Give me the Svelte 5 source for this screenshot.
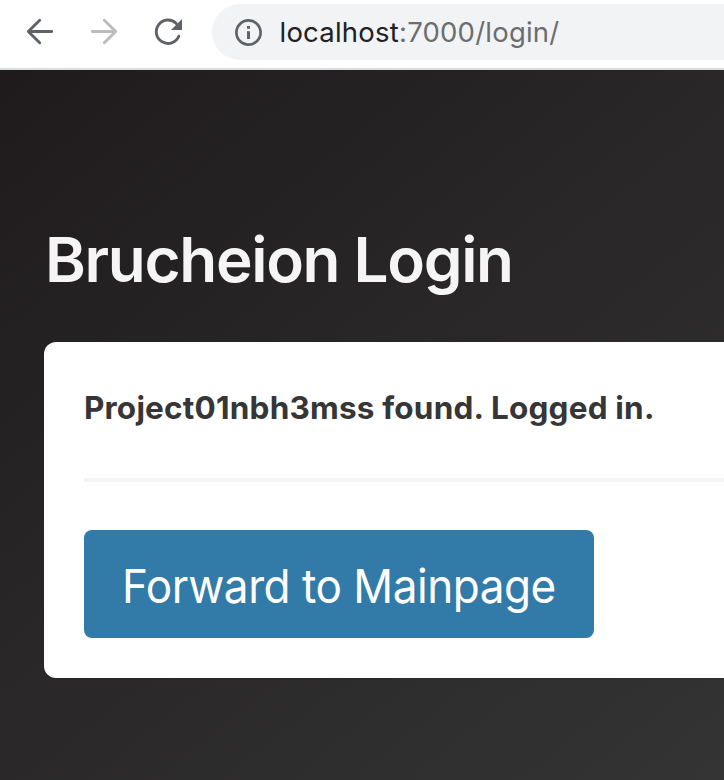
<script>
  const host = 'localhost';
  const path = ':7000/login/';
</script>

<div class="window">
  <header class="toolbar">
    <svg class="nav" width="212" height="64" viewBox="0 0 212 64" fill="none" stroke-linecap="round" stroke-linejoin="round">
      <path d="M51.7 31.5H28.5M39.7 20.2L28.3 31.5L39.7 42.7" stroke="#5f6368" stroke-width="2.9" />
      <path d="M92.3 31.5H115.5M104.3 20.2L115.7 31.5L104.3 42.7" stroke="#babcbe" stroke-width="2.9" />
      <path d="M178.8 36.2A11.7 11.7 0 1 1 176.3 23.5" stroke="#5f6368" stroke-width="2.9" />
      <path d="M182 19V30H171Z" fill="#5f6368" />
    </svg>
    <div class="address">
      <svg width="28" height="28" viewBox="0 0 28 28" fill="none">
        <circle cx="13.5" cy="14.5" r="12.1" stroke="#5f6368" stroke-width="2.7" />
        <path d="M13.5 8V10.8M13.5 13.3V21" stroke="#5f6368" stroke-width="3" />
      </svg>
      <span class="url"><span class="host">{host}</span>{path}</span>
    </div>
  </header>
  <main>
    <h1>Brucheion Login</h1>
    <section class="box">
      <p>Project01nbh3mss found. Logged in.</p>
      <hr />
      <button><span class="label">Forward to Mainpage</span></button>
    </section>
  </main>
</div>

<style>
  .window {
    width: 724px;
    height: 780px;
    overflow: hidden;
    display: flex;
    flex-direction: column;
    font-family: Inter, "Liberation Sans", sans-serif;
    background: #fff;
  }
  .toolbar {
    box-sizing: border-box;
    height: 70px;
    flex: none;
    display: flex;
    align-items: flex-start;
    border-bottom: 2px solid #dadce0;
  }
  .nav {
    flex: none;
  }
  .address {
    box-sizing: border-box;
    flex: 1;
    height: 56px;
    margin-top: 4px;
    padding-left: 23px;
    display: flex;
    align-items: center;
    gap: 16.5px;
    background: #f1f3f4;
    border-radius: 28px 0 0 28px;
  }
  .url {
    padding-top: 1px;
    font-size: 27.5px;
    line-height: 55px;
    letter-spacing: 0.22px;
    color: #6b6d70;
    white-space: nowrap;
  }
  .host {
    color: #202124;
  }
  main {
    flex: 1;
    padding: 154px 0 0 45px;
    background: linear-gradient(141deg, #1f1b1c 0%, #343434 100%);
  }
  h1 {
    margin: 0 0 46px;
    font-size: 62px;
    line-height: 72px;
    font-weight: 600;
    letter-spacing: -1.32px;
    color: #f5f5f5;
    white-space: nowrap;
  }
  .box {
    box-sizing: border-box;
    height: 336px;
    margin-left: -1px;
    padding: 42px 0 38px 40px;
    background: #fff;
    border-radius: 12px 0 0 12px;
    box-shadow: 0 1px 2px rgba(10, 10, 10, 0.1);
  }
  p {
    margin: 0;
    font-size: 31.5px;
    line-height: 48px;
    font-weight: 700;
    letter-spacing: 0.2px;
    color: #363636;
    white-space: nowrap;
  }
  hr {
    height: 4px;
    margin: 46px 0 48px;
    border: 0;
    background: #f5f5f5;
  }
  button {
    display: block;
    box-sizing: border-box;
    width: 510px;
    height: 108px;
    padding: 3px 0 0 38px;
    border: 0;
    border-radius: 8px;
    background: #327aa8;
    color: #fff;
    font-family: inherit;
    font-size: 46.5px;
    font-weight: 400;
    letter-spacing: -0.5px;
    text-align: left;
    white-space: nowrap;
  }
  .label {
    display: inline-block;
    transform: scaleX(0.948);
    transform-origin: left;
  }
</style>
